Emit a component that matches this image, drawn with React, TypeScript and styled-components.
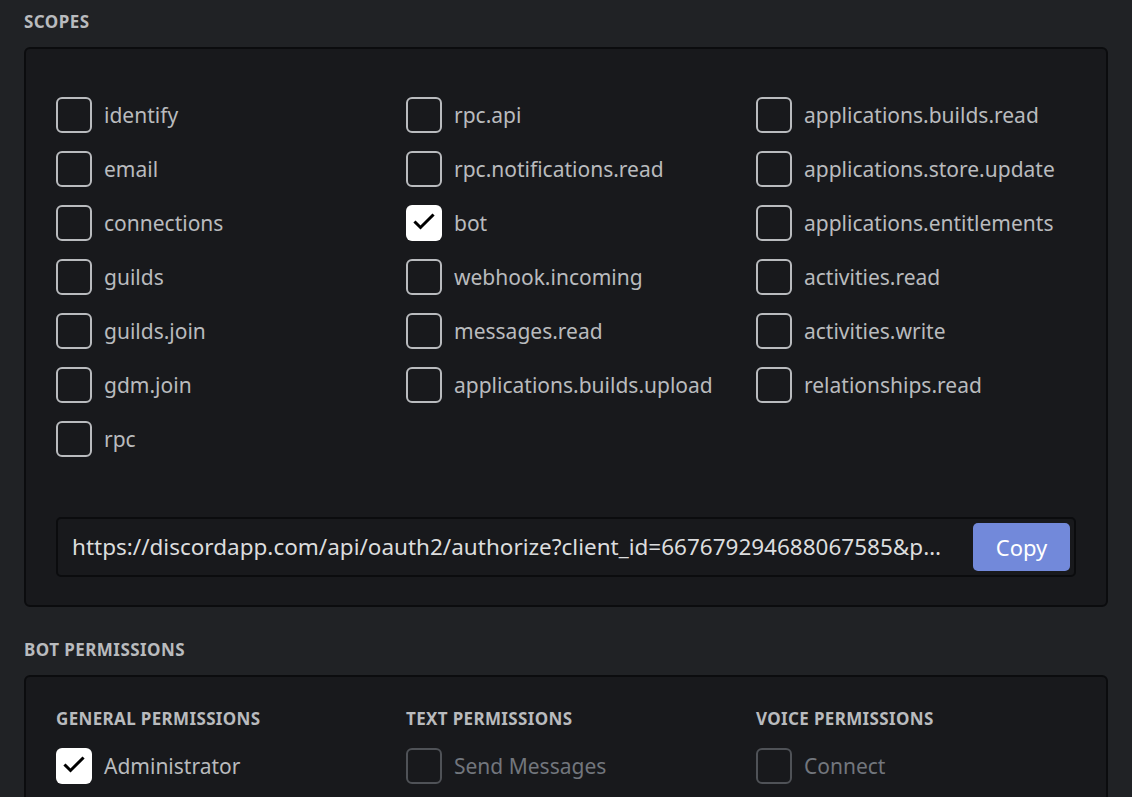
import React from "react";
import styled, { createGlobalStyle } from "styled-components";

const GlobalStyle = createGlobalStyle`
  html, body {
    margin: 0;
    padding: 0;
    background: #202225;
  }
  body {
    font-family: "Noto Sans", "Open Sans", sans-serif;
  }
`;

const scopes = [
  ["identify", "email", "connections", "guilds", "guilds.join", "gdm.join", "rpc"],
  ["rpc.api", "rpc.notifications.read", "bot", "webhook.incoming", "messages.read", "applications.builds.upload"],
  [
    "applications.builds.read",
    "applications.store.update",
    "applications.entitlements",
    "activities.read",
    "activities.write",
    "relationships.read",
  ],
];

const checked = ["bot"];

const permissionGroups = [
  { title: "General Permissions", items: [{ name: "Administrator", checked: true, disabled: false }] },
  { title: "Text Permissions", items: [{ name: "Send Messages", checked: false, disabled: true }] },
  { title: "Voice Permissions", items: [{ name: "Connect", checked: false, disabled: true }] },
];

const url =
  "https://discordapp.com/api/oauth2/authorize?client_id=667679294688067585&permissions=8&scope=bot";

type CheckProps = { label: string; checked?: boolean; disabled?: boolean };

const CheckItem = ({ label, checked = false, disabled = false }: CheckProps) => (
  <Item>
    <Box $checked={checked} $disabled={disabled}>
      {checked && (
        <svg width="36" height="36" viewBox="0 0 36 36">
          <path
            d="M9.5 17.5 L14.5 22.5 L26.5 10.5"
            fill="none"
            stroke="#000"
            strokeWidth="3"
            strokeLinecap="square"
          />
        </svg>
      )}
    </Box>
    <Label $disabled={disabled}>{label}</Label>
  </Item>
);

export default function App() {
  return (
    <Page>
      <GlobalStyle />
      <SectionTitle>Scopes</SectionTitle>
      <Panel>
        <ScopeGrid>
          {scopes.map((col, i) => (
            <Column key={i}>
              {col.map((s) => (
                <CheckItem key={s} label={s} checked={checked.includes(s)} />
              ))}
            </Column>
          ))}
        </ScopeGrid>
        <UrlBox>
          <UrlText>{url}</UrlText>
          <CopyButton>Copy</CopyButton>
        </UrlBox>
      </Panel>

      <SectionTitle $spaced>Bot Permissions</SectionTitle>
      <PermPanel>
        <ScopeGrid>
          {permissionGroups.map((g) => (
            <Column key={g.title}>
              <GroupTitle>{g.title}</GroupTitle>
              {g.items.map((it) => (
                <CheckItem key={it.name} label={it.name} checked={it.checked} disabled={it.disabled} />
              ))}
            </Column>
          ))}
        </ScopeGrid>
      </PermPanel>
    </Page>
  );
}

const Page = styled.div`
  padding: 10px 24px 0;
  height: 797px;
  box-sizing: border-box;
  overflow: hidden;
`;

const SectionTitle = styled.h2<{ $spaced?: boolean }>`
  margin: ${(p) => (p.$spaced ? "31px" : "0")} 0 13px;
  font-size: 17px;
  line-height: 24px;
  font-weight: 700;
  text-transform: uppercase;
  letter-spacing: 0.45px;
  color: #b9bbbe;
`;

const Panel = styled.div`
  background: #18191c;
  border: 2px solid #0b0c0e;
  border-radius: 6px;
  padding: 48px 30px 28px;
`;

const PermPanel = styled(Panel)`
  padding-top: 31px;
`;

const ScopeGrid = styled.div`
  display: grid;
  grid-template-columns: 350px 350px 1fr;
`;

const Column = styled.div`
  display: flex;
  flex-direction: column;
  gap: 18px;
`;

const GroupTitle = styled.div`
  font-size: 17px;
  line-height: 22px;
  font-weight: 700;
  text-transform: uppercase;
  letter-spacing: 0.35px;
  color: #b9bbbe;
`;

const Item = styled.div`
  display: flex;
  align-items: center;
  gap: 12px;
  height: 36px;
`;

const Box = styled.div<{ $checked: boolean; $disabled: boolean }>`
  width: 36px;
  height: 36px;
  box-sizing: border-box;
  flex-shrink: 0;
  border-radius: 6px;
  border: ${(p) => (p.$checked ? "none" : `2px solid ${p.$disabled ? "#4f5257" : "#b9bbbe"}`)};
  background: ${(p) => (p.$checked ? "#fff" : "transparent")};
  display: flex;
  align-items: center;
  justify-content: center;
`;

const Label = styled.span<{ $disabled: boolean }>`
  font-size: 21px;
  line-height: 28px;
  color: ${(p) => (p.$disabled ? "#72767d" : "#b9bbbe")};
  white-space: nowrap;
`;

const UrlBox = styled.div`
  margin-top: 60px;
  display: flex;
  align-items: center;
  gap: 28px;
  padding: 4px 4px 4px 14px;
  background: #18191c;
  border: 2px solid #0b0c0e;
  border-radius: 5px;
`;

const UrlText = styled.div`
  flex: 1;
  min-width: 0;
  font-size: 22.5px;
  line-height: 30px;
  color: #dcddde;
  white-space: nowrap;
  overflow: hidden;
  text-overflow: ellipsis;
`;

const CopyButton = styled.button`
  flex-shrink: 0;
  width: 97px;
  height: 48px;
  border: none;
  border-radius: 5px;
  background: #7289da;
  color: #fff;
  font-family: inherit;
  font-size: 22px;
  cursor: pointer;
`;
